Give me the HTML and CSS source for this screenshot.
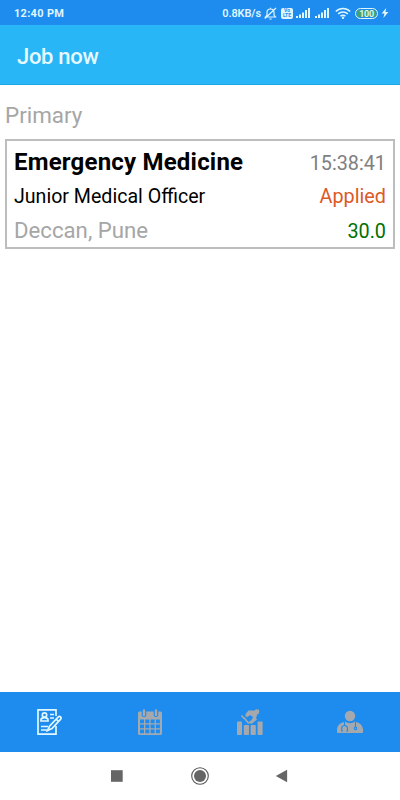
FILE: index.html
```html
<!DOCTYPE html>
<html lang="en">
<head>
  <meta charset="UTF-8">
  <meta name="viewport" content="width=device-width, initial-scale=1.0">
  <title>Job now</title>
  <link rel="stylesheet" href="styles.css">
</head>
<body>

<div class="screen">
  <!-- Status Bar -->
  <div class="status-bar">
    <span class="clock">12:40 PM</span>
    <div class="status-icons">
      <span class="speed">0.8KB/s</span>
      <svg class="bell" width="13" height="13" viewBox="0 0 13 13" fill="none" stroke="currentColor" stroke-width="1.2">
        <path d="M1.500 10h10L10 8V5.500C10 3.300 8.500 2 6.500 2S3 3.300 3 5.500V8L1.500 10zM5.300 12h2.400M6.500 .8V2M.8 11.500L12 1"/>
      </svg>
      <span class="volte"><span>Vo</span><span>LTE</span></span>
      <svg class="signal" width="15" height="12" viewBox="0 0 15 12" fill="currentColor">
        <path d="M0 9h2v2H0zM3 7.500h2V11H3zM6 5.500h2V11H6zM9 3h2v8H9zM12 1h2v10h-2z"/>
      </svg>
      <svg class="signal" width="15" height="12" viewBox="0 0 15 12" fill="currentColor">
        <path d="M0 9h2v2H0zM3 7.500h2V11H3zM6 5.500h2V11H6zM9 3h2v8H9zM12 1h2v10h-2z"/>
      </svg>
      <svg class="wifi" width="16" height="12" viewBox="0 0 16 12" fill="none" stroke="currentColor" stroke-width="1.5">
        <path d="M.8 4.500C5 .4 11 .4 15.200 4.500M3.200 6.900c2.700-2.500 6.900-2.500 9.600 0M5.500 9.200c1.500-1.200 3.500-1.200 5 0"/>
        <circle cx="8" cy="10.700" r=".5"/>
      </svg>
      <span class="battery">100</span>
      <svg class="bolt" width="8" height="10" viewBox="0 0 8 10" fill="currentColor">
        <path d="M5.200 0L.6 5.600h2.800L2.400 10 7.400 4H4.500z"/>
      </svg>
    </div>
  </div>

  <!-- App Bar -->
  <header class="app-bar">
    <h1>Job now</h1>
  </header>

  <!-- Applied Jobs -->
  <main class="content">
    <h2>Primary</h2>
    <div class="job-card">
      <div class="job-row">
        <span class="job-title">Emergency Medicine</span>
        <span class="job-time">15:38:41</span>
      </div>
      <div class="job-row">
        <span class="job-role">Junior Medical Officer</span>
        <span class="job-status">Applied</span>
      </div>
      <div class="job-row">
        <span class="job-location">Deccan, Pune</span>
        <span class="job-rate">30.0</span>
      </div>
    </div>
  </main>

  <!-- Tabs -->
  <nav class="tab-bar">
    <a class="tab active">
      <svg width="28" height="28" viewBox="0 0 28 28" fill="none" stroke="currentColor" stroke-width="1.700">
        <path d="M20 8V1.900H2V26.200H20V18"/>
        <circle cx="8.500" cy="7" r="2.200"/>
        <path d="M5 13v-1c0-3.200 7-3.200 7 0v1zM14 6.500h4M14 10h4M5 18.500h7M5 22h6"/>
        <path fill="#1e8cee" d="M11.500 22.500l2-4.300 8.800-9.400q1.200-1 2.300.1t.1 2.300L16 20.500z"/>
        <path d="M20 11l2.500 2.500"/>
      </svg>
    </a>
    <a class="tab">
      <svg width="28" height="28" viewBox="0 0 28 28">
        <path fill="currentColor" fill-rule="evenodd" d="M3.500 3.500h2.200V7c0 2.800 4.600 2.800 4.600 0V3.500h7.400V7c0 2.800 4.600 2.800 4.600 0V3.500h2.200Q26 3.500 26 5v20.500q0 1.500-1.500 1.500h-21Q2 27 2 25.500V5q0-1.500 1.500-1.500zM4 11.500v3.700h4v-3.700zM9.300 11.500v3.700h4v-3.700zM14.600 11.500v3.700h4v-3.700zM19.900 11.500v3.700h4v-3.700zM4 16.500v3.700h4v-3.700zM9.300 16.500v3.700h4v-3.700zM14.600 16.500v3.700h4v-3.700zM19.900 16.500v3.700h4v-3.700zM4 21.500v3.700h4v-3.700zM9.300 21.500v3.700h4v-3.700zM14.600 21.500v3.700h4v-3.700zM19.900 21.500v3.700h4v-3.700z"/>
        <path fill="none" stroke="currentColor" stroke-width="2.400" stroke-linecap="round" d="M8 2.500V7M20 2.500V7"/>
      </svg>
    </a>
    <a class="tab">
      <svg width="28" height="28" viewBox="0 0 28 28" fill="currentColor">
        <rect x="1" y="13.500" width="5" height="13.500" rx=".8"/>
        <rect x="7.800" y="17" width="5.200" height="10" rx=".8"/>
        <rect x="14.600" y="17" width="5.200" height="10" rx=".8"/>
        <rect x="21.600" y="13.500" width="5" height="13.500" rx=".8"/>
        <path d="M9.500 6L12.500 2.500h4.500l2.500 1.500 1.500 3.500-1 2.500 1 1.500-5.500 4.500-3.500-1.500 3.500-2.500 1.500-3-3-2-2.500 2-2-.5z"/>
        <path d="M17.500 3l3-2 1 1 .8-1 1.200 2.200-.8.8.5 1.500-3 1.500z"/>
        <path fill="none" stroke="currentColor" stroke-width="1.600" d="M5.500 7.500l2.500 3M7.800 9.500l5 6"/>
      </svg>
    </a>
    <a class="tab">
      <svg width="28" height="28" viewBox="0 0 28 28">
        <circle cx="14" cy="8" r="5.200" fill="currentColor"/>
        <path fill="currentColor" d="M1 24v-2c0-4 2.500-7 8-8.500 3 2.200 7 2.200 10 0 5.500 1.500 8 4.500 8 8.500v2q0 1-1 1H2q-1 0-1-1z"/>
        <path class="stethoscope" d="M8.500 13.500V17.500M7 23H5.700v-2.500c0-4 5.800-4 5.800 0V23h-1.300M19.500 13.500V19"/>
        <circle class="stethoscope" cx="19.500" cy="20.300" r="1.300"/>
      </svg>
    </a>
  </nav>

  <!-- System Navigation -->
  <div class="system-nav">
    <svg width="20" height="20" viewBox="0 0 20 20"><path d="M4 4.200h11.700v11.600H4z"/></svg>
    <svg width="20" height="20" viewBox="0 0 20 20">
      <circle cx="10" cy="10" r="8.300" fill="none" stroke="#555" stroke-width="1.100"/>
      <circle cx="10" cy="10" r="6"/>
    </svg>
    <svg width="20" height="20" viewBox="0 0 20 20"><path d="M2.800 10L14.100 3.800v12.400z"/></svg>
  </div>
</div>

</body>
</html>
```
FILE: styles.css
```css
* {
  box-sizing: border-box;
}
body {
  margin: 0;
  font-family: Roboto, sans-serif;
  background-color: #fff;
}
h1, h2 {
  margin: 0;
}
svg {
  display: block;
  flex-shrink: 0;
}
.screen {
  display: flex;
  flex-direction: column;
  height: 800px;
}
.status-bar {
  display: flex;
  align-items: center;
  justify-content: space-between;
  height: 25px;
  padding: 1px 11px 0 14px;
  background-color: #1e8cee;
  color: #dff6ff;
}
.clock {
  font-size: 11px;
  font-weight: 700;
  letter-spacing: 0.3px;
}
.status-icons {
  display: flex;
  align-items: center;
}
.speed {
  font-size: 11px;
  font-weight: 600;
  letter-spacing: -0.1px;
  margin-right: 3px;
}
.volte {
  display: flex;
  flex-direction: column;
  align-items: center;
  justify-content: center;
  width: 12px;
  height: 11px;
  margin: 0 3px 0 4px;
  border-radius: 2px;
  background-color: #dff6ff;
  color: #1e8cee;
  font-size: 5px;
  font-weight: 700;
  line-height: 5px;
}
.signal {
  margin-right: 4px;
}
.wifi {
  margin: 0 4px 0 1px;
}
.battery {
  width: 23px;
  height: 11px;
  border: 1px solid #dff6ff;
  border-radius: 6px;
  background-color: #43a36b;
  box-shadow: inset 0 0 0 1px #1e8cee;
  font-size: 9px;
  font-weight: 600;
  letter-spacing: -0.3px;
  line-height: 10px;
  text-align: center;
}
.bolt {
  margin-left: 3px;
}
.app-bar {
  display: flex;
  align-items: center;
  height: 60px;
  padding: 4px 17px 0;
  background-color: #29b6f6;
  border-bottom: 1px solid #20a5e6;
}
.app-bar h1 {
  color: #e6f9ff;
  font-size: 22px;
  font-weight: 500;
  letter-spacing: -0.3px;
}
.content {
  flex: 1;
  padding: 17px 5px 0;
}
.content h2 {
  color: #a6a6a6;
  font-size: 22.4px;
  font-weight: 400;
  line-height: 26px;
}
.job-card {
  margin-top: 11px;
  height: 110px;
  padding: 4px 7px;
  border: 2px solid #bdbdbd;
}
.job-row {
  display: flex;
  align-items: center;
  justify-content: space-between;
  height: 34px;
  font-size: 19.8px;
}
.job-title {
  color: #000;
  font-size: 24px;
  font-weight: 700;
  letter-spacing: 0.2px;
}
.job-time {
  padding-top: 2px;
  color: #808080;
}
.job-role {
  color: #000;
  font-size: 19.6px;
}
.job-status {
  color: #dc5a28;
}
.job-location {
  color: #a6a6a6;
  font-size: 22.2px;
}
.job-rate {
  padding-top: 2px;
  color: #007000;
}
.tab-bar {
  display: grid;
  grid-template-columns: repeat(4, 1fr);
  height: 60px;
  background-color: #1e8cee;
}
.tab {
  display: flex;
  align-items: center;
  justify-content: center;
  color: #a5a9ad;
}
.tab.active {
  color: #e0f8ff;
}
.stethoscope {
  fill: none;
  stroke: #1e8cee;
  stroke-width: 1.1;
}
.system-nav {
  display: flex;
  align-items: center;
  justify-content: center;
  gap: 63px;
  height: 48px;
  fill: #666;
}
```
